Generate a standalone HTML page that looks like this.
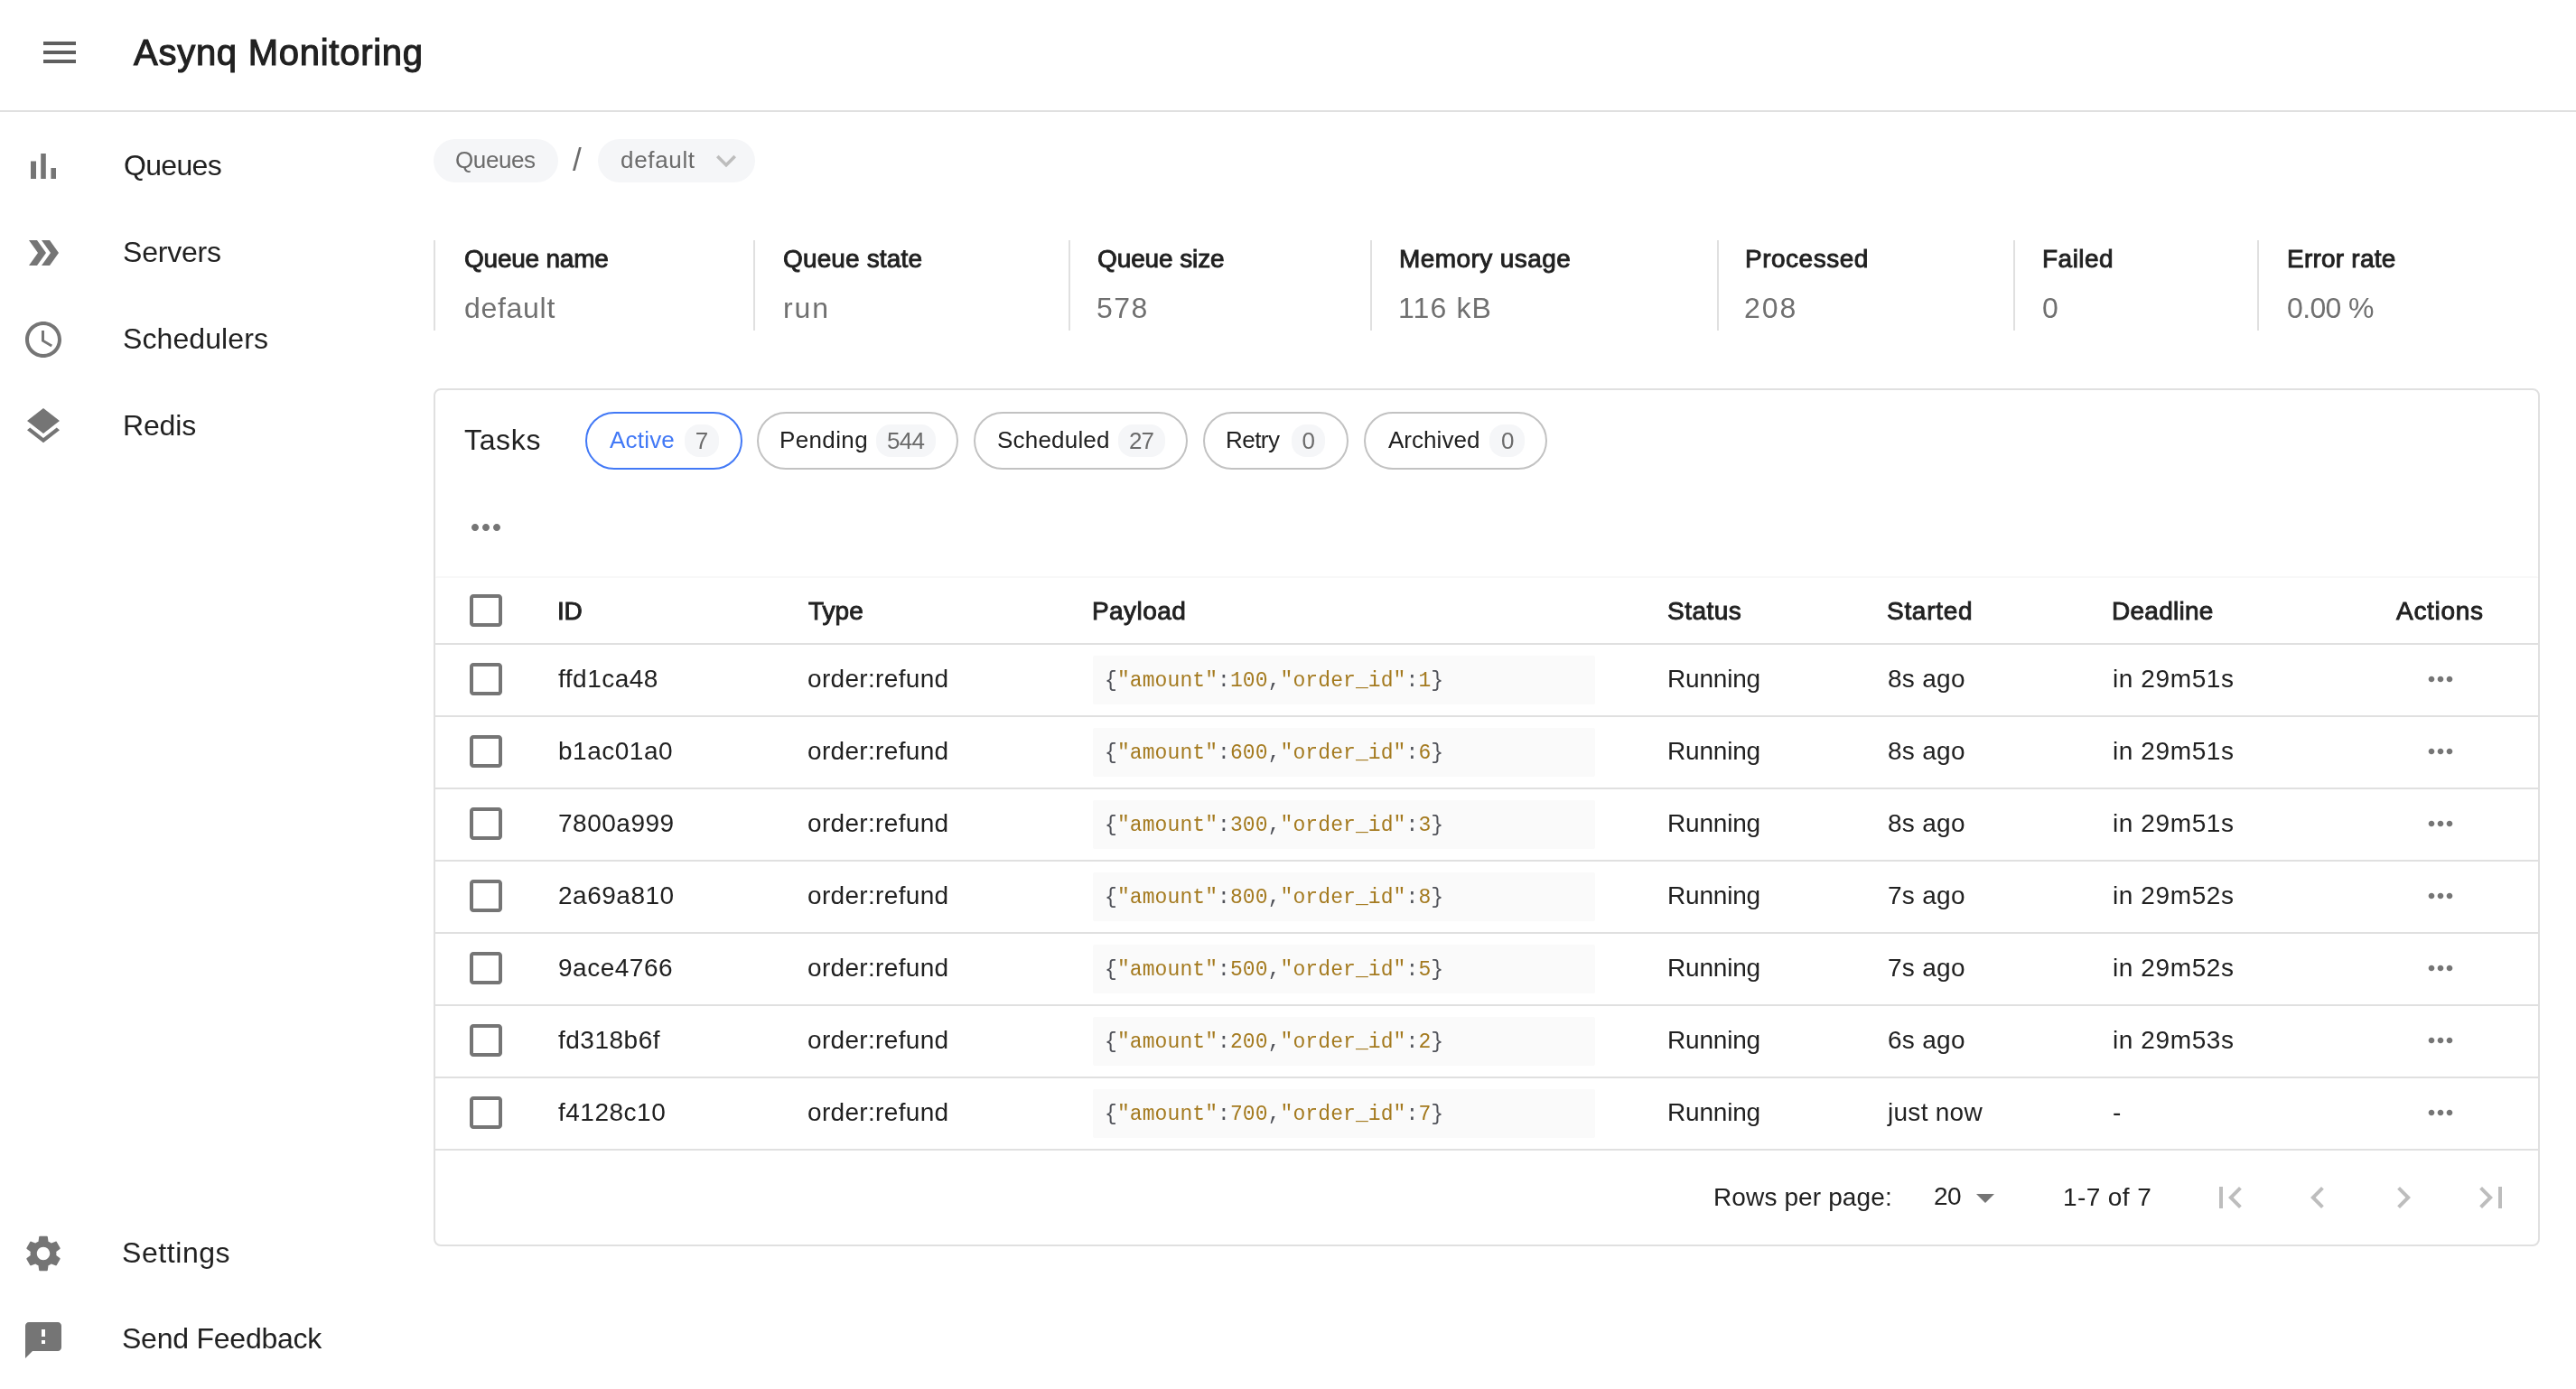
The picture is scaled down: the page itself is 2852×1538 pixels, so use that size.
<!DOCTYPE html>
<html><head><meta charset="utf-8"><title>Asynq Monitoring</title>
<style>
html,body{margin:0;padding:0;background:#ffffff;}
body{width:2852px;height:1538px;position:relative;overflow:hidden;font-family:'Liberation Sans', sans-serif;color:#212121;}
.t{position:absolute;white-space:nowrap;will-change:transform;}
.b{position:absolute;}
.i{position:absolute;display:block;}
</style></head><body>
<div class="b" style="left:0px;top:122px;width:2852px;height:2px;background:#e0e0e0"></div>
<svg class="i" style="left:42px;top:34px;width:48px;height:48px" viewBox="0 0 24 24"><path fill="#5f5f5f" d="M3 18h18v-2H3v2zm0-5h18v-2H3v2zm0-7v2h18V6H3z"/></svg>
<div class="t" style="left:147.50px;top:38.14px;font-size:40px;line-height:40px;letter-spacing:0.733px;-webkit-text-stroke:1.1px #212121;">Asynq Monitoring</div>
<svg class="i" style="left:24px;top:160px;width:48px;height:48px" viewBox="0 0 24 24"><path fill="#757575" d="M5 9.2h3V19H5zM10.6 5h2.8v14h-2.8zm5.6 8H19v6h-2.8z"/></svg>
<div class="t" style="left:136.78px;top:166.91px;font-size:32px;line-height:32px;letter-spacing:-0.680px;">Queues</div>
<svg class="i" style="left:24px;top:256px;width:48px;height:48px" viewBox="0 0 24 24"><path fill="#757575" d="M15.5 5H11l5 7-5 7h4.5l5-7zM8.5 5H4l5 7-5 7h4.5l5-7z"/></svg>
<div class="t" style="left:135.78px;top:262.91px;font-size:32px;line-height:32px;letter-spacing:-0.200px;">Servers</div>
<svg class="i" style="left:24px;top:352px;width:48px;height:48px" viewBox="0 0 24 24"><path fill="#757575" d="M11.99 2C6.47 2 2 6.48 2 12s4.47 10 9.99 10C17.52 22 22 17.52 22 12S17.52 2 11.99 2zM12 20c-4.42 0-8-3.58-8-8s3.58-8 8-8 8 3.58 8 8-3.58 8-8 8zm.5-13H11v6l5.25 3.15.75-1.230-4.5-2.67z"/></svg>
<div class="t" style="left:135.78px;top:358.91px;font-size:32px;line-height:32px;letter-spacing:0.089px;">Schedulers</div>
<svg class="i" style="left:24px;top:448px;width:48px;height:48px" viewBox="0 0 24 24"><path fill="#757575" d="M11.99 18.54l-7.37-5.73L3 14.07l9 7 9-7-1.63-1.27-7.38 5.74zM12 16l7.36-5.73L21 9l-9-7-9 7 1.63 1.27L12 16z"/></svg>
<div class="t" style="left:135.78px;top:454.91px;font-size:32px;line-height:32px;letter-spacing:-0.150px;">Redis</div>
<svg class="i" style="left:24px;top:1364px;width:48px;height:48px" viewBox="0 0 24 24"><path fill="#757575" d="M19.14 12.94c.04-.3.06-.61.06-.94 0-.32-.02-.64-.07-.94l2.03-1.58c.18-.14.23-.41.12-.61l-1.92-3.32c-.12-.22-.37-.29-.59-.22l-2.39.96c-.5-.38-1.03-.7-1.62-.94l-.36-2.54c-.04-.24-.24-.41-.48-.41h-3.84c-.24 0-.43.17-.47.41l-.36 2.54c-.59.24-1.13.57-1.62.94l-2.39-.96c-.22-.08-.47 0-.59.22L2.74 8.87c-.12.21-.08.47.12.61l2.03 1.58c-.05.3-.09.63-.09.94s.02.64.07.94l-2.03 1.58c-.18.14-.23.41-.12.61l1.92 3.32c.12.22.37.29.59.22l2.39-.96c.5.38 1.03.7 1.62.94l.36 2.54c.05.24.24.41.48.41h3.84c.24 0 .44-.17.47-.41l.36-2.54c.59-.24 1.13-.56 1.62-.94l2.39.96c.22.08.47 0 .59-.22l1.92-3.32c.12-.22.07-.47-.12-.61l-2.01-1.58zM12 15.6c-1.98 0-3.6-1.62-3.6-3.6s1.62-3.6 3.6-3.6 3.6 1.62 3.6 3.6-1.62 3.6-3.6 3.6z"/></svg>
<div class="t" style="left:135.28px;top:1370.91px;font-size:32px;line-height:32px;letter-spacing:0.571px;">Settings</div>
<svg class="i" style="left:24px;top:1460px;width:48px;height:48px" viewBox="0 0 24 24"><path fill="#757575" d="M20 2H4c-1.1 0-1.99.9-1.99 2L2 22l4-4h14c1.1 0 2-.9 2-2V4c0-1.1-.9-2-2-2zm-7 12h-2v-2h2v2zm0-4h-2V6h2v4z"/></svg>
<div class="t" style="left:135.28px;top:1465.91px;font-size:32px;line-height:32px;letter-spacing:-0.233px;">Send Feedback</div>
<div class="b" style="left:480px;top:154px;width:138px;height:48px;background:#f5f6f8;border-radius:24px"></div>
<div class="t" style="left:504.44px;top:163.99px;font-size:26px;line-height:26px;color:#6b6b6b;letter-spacing:-0.400px;">Queues</div>
<div class="t" style="left:633.60px;top:158.87px;font-size:35px;line-height:35px;color:#6b6b6b;">/</div>
<div class="b" style="left:662px;top:154px;width:174px;height:48px;background:#f5f6f8;border-radius:24px"></div>
<div class="t" style="left:686.94px;top:163.99px;font-size:26px;line-height:26px;color:#6b6b6b;letter-spacing:0.667px;">default</div>
<svg class="i" style="left:782px;top:156px;width:44px;height:44px" viewBox="0 0 24 24"><path fill="#bdbdbd" d="M16.59 8.59L12 13.17 7.41 8.59 6 10l6 6 6-6z"/></svg>
<div class="b" style="left:480px;top:266px;width:2px;height:100px;background:#e0e0e0"></div>
<div class="t" style="left:513.62px;top:273.30px;font-size:28px;line-height:28px;letter-spacing:-0.222px;-webkit-text-stroke:0.9px #212121;">Queue name</div>
<div class="t" style="left:514.08px;top:324.91px;font-size:32px;line-height:32px;color:#707070;letter-spacing:0.700px;">default</div>
<div class="b" style="left:834px;top:266px;width:2px;height:100px;background:#e0e0e0"></div>
<div class="t" style="left:867.02px;top:273.30px;font-size:28px;line-height:28px;letter-spacing:0.140px;-webkit-text-stroke:0.9px #212121;">Queue state</div>
<div class="t" style="left:866.78px;top:324.91px;font-size:32px;line-height:32px;color:#707070;letter-spacing:1.900px;">run</div>
<div class="b" style="left:1183px;top:266px;width:2px;height:100px;background:#e0e0e0"></div>
<div class="t" style="left:1215.32px;top:273.30px;font-size:28px;line-height:28px;letter-spacing:-0.111px;-webkit-text-stroke:0.9px #212121;">Queue size</div>
<div class="t" style="left:1213.88px;top:324.91px;font-size:32px;line-height:32px;color:#707070;letter-spacing:1.400px;">578</div>
<div class="b" style="left:1517px;top:266px;width:2px;height:100px;background:#e0e0e0"></div>
<div class="t" style="left:1548.72px;top:273.30px;font-size:28px;line-height:28px;letter-spacing:0.418px;-webkit-text-stroke:0.9px #212121;">Memory usage</div>
<div class="t" style="left:1548.18px;top:324.91px;font-size:32px;line-height:32px;color:#707070;letter-spacing:1.120px;">116 kB</div>
<div class="b" style="left:1901px;top:266px;width:2px;height:100px;background:#e0e0e0"></div>
<div class="t" style="left:1932.32px;top:273.30px;font-size:28px;line-height:28px;letter-spacing:0.500px;-webkit-text-stroke:0.9px #212121;">Processed</div>
<div class="t" style="left:1931.48px;top:324.91px;font-size:32px;line-height:32px;color:#707070;letter-spacing:2.000px;">208</div>
<div class="b" style="left:2229px;top:266px;width:2px;height:100px;background:#e0e0e0"></div>
<div class="t" style="left:2261.32px;top:273.30px;font-size:28px;line-height:28px;letter-spacing:0.480px;-webkit-text-stroke:0.9px #212121;">Failed</div>
<div class="t" style="left:2261.38px;top:324.91px;font-size:32px;line-height:32px;color:#707070;">0</div>
<div class="b" style="left:2499px;top:266px;width:2px;height:100px;background:#e0e0e0"></div>
<div class="t" style="left:2531.62px;top:273.30px;font-size:28px;line-height:28px;letter-spacing:0.222px;-webkit-text-stroke:0.9px #212121;">Error rate</div>
<div class="t" style="left:2532.08px;top:324.91px;font-size:32px;line-height:32px;color:#707070;letter-spacing:-0.640px;">0.00 %</div>
<div class="b" style="left:480px;top:430px;width:2332px;height:950px;border:2px solid #e0e0e0;border-radius:8px;box-sizing:border-box"></div>
<div class="t" style="left:514.08px;top:470.91px;font-size:32px;line-height:32px;letter-spacing:0.650px;">Tasks</div>
<div class="b" style="left:648px;top:456px;width:174px;height:64px;border:2px solid #4279f6;border-radius:32px;box-sizing:border-box"></div>
<div class="t" style="left:674.74px;top:474.09px;font-size:26px;line-height:26px;color:#4279f6;letter-spacing:0.200px;">Active</div>
<div class="b" style="left:758px;top:470px;width:38px;height:36px;background:#f5f6f8;border-radius:16px"></div>
<div class="t" style="left:758.4px;width:38px;top:475.0px;font-size:26px;line-height:26px;color:#6b6b6b;text-align:center;letter-spacing:-0.8px;text-indent:-0.8px">7</div>
<div class="b" style="left:838px;top:456px;width:223.4px;height:64px;border:2px solid #c2c2c2;border-radius:32px;box-sizing:border-box"></div>
<div class="t" style="left:862.94px;top:474.09px;font-size:26px;line-height:26px;letter-spacing:0.367px;">Pending</div>
<div class="b" style="left:970px;top:470px;width:66px;height:36px;background:#f5f6f8;border-radius:16px"></div>
<div class="t" style="left:970.4px;width:66px;top:475.0px;font-size:26px;line-height:26px;color:#6b6b6b;text-align:center;letter-spacing:-0.8px;text-indent:-0.8px">544</div>
<div class="b" style="left:1078px;top:456px;width:237.4px;height:64px;border:2px solid #c2c2c2;border-radius:32px;box-sizing:border-box"></div>
<div class="t" style="left:1103.64px;top:474.09px;font-size:26px;line-height:26px;letter-spacing:0.200px;">Scheduled</div>
<div class="b" style="left:1238px;top:470px;width:52px;height:36px;background:#f5f6f8;border-radius:16px"></div>
<div class="t" style="left:1238.4px;width:52px;top:475.0px;font-size:26px;line-height:26px;color:#6b6b6b;text-align:center;letter-spacing:-0.8px;text-indent:-0.8px">27</div>
<div class="b" style="left:1332.4px;top:456px;width:160.6px;height:64px;border:2px solid #c2c2c2;border-radius:32px;box-sizing:border-box"></div>
<div class="t" style="left:1357.14px;top:474.09px;font-size:26px;line-height:26px;letter-spacing:-0.550px;">Retry</div>
<div class="b" style="left:1430px;top:470px;width:37.4px;height:36px;background:#f5f6f8;border-radius:16px"></div>
<div class="t" style="left:1430.4px;width:37.4px;top:475.0px;font-size:26px;line-height:26px;color:#6b6b6b;text-align:center;letter-spacing:-0.8px;text-indent:-0.8px">0</div>
<div class="b" style="left:1510.2px;top:456px;width:203.1px;height:64px;border:2px solid #c2c2c2;border-radius:32px;box-sizing:border-box"></div>
<div class="t" style="left:1536.84px;top:474.09px;font-size:26px;line-height:26px;letter-spacing:0.029px;">Archived</div>
<div class="b" style="left:1649.3px;top:470px;width:38.4px;height:36px;background:#f5f6f8;border-radius:16px"></div>
<div class="t" style="left:1649.7px;width:38.4px;top:475.0px;font-size:26px;line-height:26px;color:#6b6b6b;text-align:center;letter-spacing:-0.8px;text-indent:-0.8px">0</div>
<svg class="i" style="left:514px;top:560px;width:48px;height:48px" viewBox="0 0 24 24"><path fill="#757575" d="M6 10c-1.1 0-2 .9-2 2s.9 2 2 2 2-.9 2-2-.9-2-2-2zm12 0c-1.1 0-2 .9-2 2s.9 2 2 2 2-.9 2-2-.9-2-2-2zm-6 0c-1.1 0-2 .9-2 2s.9 2 2 2 2-.9 2-2-.9-2-2-2z"/></svg>
<div class="b" style="left:482px;top:638px;width:2328px;height:2px;background:#f8f8f8;border-radius:8px 8px 0 0"></div>
<svg class="i" style="left:514px;top:652px;width:48px;height:48px" viewBox="0 0 24 24"><path fill="#757575" d="M19 5v14H5V5h14m0-2H5c-1.11 0-2 .9-2 2v14c0 1.1.89 2 2 2h14c1.1 0 2-.9 2-2V5c0-1.1-.9-2-2-2z"/></svg>
<div class="t" style="left:616.62px;top:663.30px;font-size:28px;line-height:28px;letter-spacing:-0.200px;-webkit-text-stroke:0.9px #212121;">ID</div>
<div class="t" style="left:894.72px;top:663.30px;font-size:28px;line-height:28px;-webkit-text-stroke:0.9px #212121;">Type</div>
<div class="t" style="left:1208.82px;top:663.30px;font-size:28px;line-height:28px;letter-spacing:0.433px;-webkit-text-stroke:0.9px #212121;">Payload</div>
<div class="t" style="left:1845.62px;top:663.30px;font-size:28px;line-height:28px;letter-spacing:0.480px;-webkit-text-stroke:0.9px #212121;">Status</div>
<div class="t" style="left:2089.42px;top:663.30px;font-size:28px;line-height:28px;letter-spacing:0.700px;-webkit-text-stroke:0.9px #212121;">Started</div>
<div class="t" style="left:2338.42px;top:663.30px;font-size:28px;line-height:28px;letter-spacing:0.257px;-webkit-text-stroke:0.9px #212121;">Deadline</div>
<div class="t" style="left:2653.32px;top:663.30px;font-size:28px;line-height:28px;letter-spacing:0.700px;-webkit-text-stroke:0.9px #212121;">Actions</div>
<div class="b" style="left:482px;top:712px;width:2328px;height:2px;background:#e0e0e0"></div>
<svg class="i" style="left:514px;top:728px;width:48px;height:48px" viewBox="0 0 24 24"><path fill="#757575" d="M19 5v14H5V5h14m0-2H5c-1.11 0-2 .9-2 2v14c0 1.1.89 2 2 2h14c1.1 0 2-.9 2-2V5c0-1.1-.9-2-2-2z"/></svg>
<div class="t" style="left:617.71px;top:738.30px;font-size:28px;line-height:28px;letter-spacing:0.503px;">ffd1ca48</div>
<div class="t" style="left:893.72px;top:738.30px;font-size:28px;line-height:28px;letter-spacing:0.327px;">order:refund</div>
<div class="b" style="left:1210px;top:726px;width:556px;height:54px;background:#fafafa;border-radius:2px"></div>
<div class="t" style="left:1222.50px;top:742.88px;font-size:23px;line-height:23px;color:#a47a1f;letter-spacing:0.092px;font-family:'Liberation Mono', monospace;"><span style="color:#505259">{</span>&quot;amount&quot;<span style="color:#505259">:</span>100<span style="color:#505259">,</span>&quot;order_id&quot;<span style="color:#505259">:</span>1<span style="color:#505259">}</span></div>
<div class="t" style="left:1846.32px;top:738.30px;font-size:28px;line-height:28px;letter-spacing:-0.200px;">Running</div>
<div class="t" style="left:2089.71px;top:738.30px;font-size:28px;line-height:28px;letter-spacing:0.280px;">8s ago</div>
<div class="t" style="left:2338.56px;top:738.30px;font-size:28px;line-height:28px;letter-spacing:0.600px;">in 29m51s</div>
<svg class="i" style="left:2682px;top:732px;width:40px;height:40px" viewBox="0 0 24 24"><path fill="#757575" d="M6 10c-1.1 0-2 .9-2 2s.9 2 2 2 2-.9 2-2-.9-2-2-2zm12 0c-1.1 0-2 .9-2 2s.9 2 2 2 2-.9 2-2-.9-2-2-2zm-6 0c-1.1 0-2 .9-2 2s.9 2 2 2 2-.9 2-2-.9-2-2-2z"/></svg>
<div class="b" style="left:482px;top:792px;width:2328px;height:2px;background:#e0e0e0"></div>
<svg class="i" style="left:514px;top:808px;width:48px;height:48px" viewBox="0 0 24 24"><path fill="#757575" d="M19 5v14H5V5h14m0-2H5c-1.11 0-2 .9-2 2v14c0 1.1.89 2 2 2h14c1.1 0 2-.9 2-2V5c0-1.1-.9-2-2-2z"/></svg>
<div class="t" style="left:617.71px;top:818.30px;font-size:28px;line-height:28px;letter-spacing:0.503px;">b1ac01a0</div>
<div class="t" style="left:893.72px;top:818.30px;font-size:28px;line-height:28px;letter-spacing:0.327px;">order:refund</div>
<div class="b" style="left:1210px;top:806px;width:556px;height:54px;background:#fafafa;border-radius:2px"></div>
<div class="t" style="left:1222.50px;top:822.88px;font-size:23px;line-height:23px;color:#a47a1f;letter-spacing:0.092px;font-family:'Liberation Mono', monospace;"><span style="color:#505259">{</span>&quot;amount&quot;<span style="color:#505259">:</span>600<span style="color:#505259">,</span>&quot;order_id&quot;<span style="color:#505259">:</span>6<span style="color:#505259">}</span></div>
<div class="t" style="left:1846.32px;top:818.30px;font-size:28px;line-height:28px;letter-spacing:-0.200px;">Running</div>
<div class="t" style="left:2089.71px;top:818.30px;font-size:28px;line-height:28px;letter-spacing:0.280px;">8s ago</div>
<div class="t" style="left:2338.56px;top:818.30px;font-size:28px;line-height:28px;letter-spacing:0.600px;">in 29m51s</div>
<svg class="i" style="left:2682px;top:812px;width:40px;height:40px" viewBox="0 0 24 24"><path fill="#757575" d="M6 10c-1.1 0-2 .9-2 2s.9 2 2 2 2-.9 2-2-.9-2-2-2zm12 0c-1.1 0-2 .9-2 2s.9 2 2 2 2-.9 2-2-.9-2-2-2zm-6 0c-1.1 0-2 .9-2 2s.9 2 2 2 2-.9 2-2-.9-2-2-2z"/></svg>
<div class="b" style="left:482px;top:872px;width:2328px;height:2px;background:#e0e0e0"></div>
<svg class="i" style="left:514px;top:888px;width:48px;height:48px" viewBox="0 0 24 24"><path fill="#757575" d="M19 5v14H5V5h14m0-2H5c-1.11 0-2 .9-2 2v14c0 1.1.89 2 2 2h14c1.1 0 2-.9 2-2V5c0-1.1-.9-2-2-2z"/></svg>
<div class="t" style="left:617.71px;top:898.30px;font-size:28px;line-height:28px;letter-spacing:0.503px;">7800a999</div>
<div class="t" style="left:893.72px;top:898.30px;font-size:28px;line-height:28px;letter-spacing:0.327px;">order:refund</div>
<div class="b" style="left:1210px;top:886px;width:556px;height:54px;background:#fafafa;border-radius:2px"></div>
<div class="t" style="left:1222.50px;top:902.88px;font-size:23px;line-height:23px;color:#a47a1f;letter-spacing:0.092px;font-family:'Liberation Mono', monospace;"><span style="color:#505259">{</span>&quot;amount&quot;<span style="color:#505259">:</span>300<span style="color:#505259">,</span>&quot;order_id&quot;<span style="color:#505259">:</span>3<span style="color:#505259">}</span></div>
<div class="t" style="left:1846.32px;top:898.30px;font-size:28px;line-height:28px;letter-spacing:-0.200px;">Running</div>
<div class="t" style="left:2089.71px;top:898.30px;font-size:28px;line-height:28px;letter-spacing:0.280px;">8s ago</div>
<div class="t" style="left:2338.56px;top:898.30px;font-size:28px;line-height:28px;letter-spacing:0.600px;">in 29m51s</div>
<svg class="i" style="left:2682px;top:892px;width:40px;height:40px" viewBox="0 0 24 24"><path fill="#757575" d="M6 10c-1.1 0-2 .9-2 2s.9 2 2 2 2-.9 2-2-.9-2-2-2zm12 0c-1.1 0-2 .9-2 2s.9 2 2 2 2-.9 2-2-.9-2-2-2zm-6 0c-1.1 0-2 .9-2 2s.9 2 2 2 2-.9 2-2-.9-2-2-2z"/></svg>
<div class="b" style="left:482px;top:952px;width:2328px;height:2px;background:#e0e0e0"></div>
<svg class="i" style="left:514px;top:968px;width:48px;height:48px" viewBox="0 0 24 24"><path fill="#757575" d="M19 5v14H5V5h14m0-2H5c-1.11 0-2 .9-2 2v14c0 1.1.89 2 2 2h14c1.1 0 2-.9 2-2V5c0-1.1-.9-2-2-2z"/></svg>
<div class="t" style="left:617.71px;top:978.30px;font-size:28px;line-height:28px;letter-spacing:0.503px;">2a69a810</div>
<div class="t" style="left:893.72px;top:978.30px;font-size:28px;line-height:28px;letter-spacing:0.327px;">order:refund</div>
<div class="b" style="left:1210px;top:966px;width:556px;height:54px;background:#fafafa;border-radius:2px"></div>
<div class="t" style="left:1222.50px;top:982.88px;font-size:23px;line-height:23px;color:#a47a1f;letter-spacing:0.092px;font-family:'Liberation Mono', monospace;"><span style="color:#505259">{</span>&quot;amount&quot;<span style="color:#505259">:</span>800<span style="color:#505259">,</span>&quot;order_id&quot;<span style="color:#505259">:</span>8<span style="color:#505259">}</span></div>
<div class="t" style="left:1846.32px;top:978.30px;font-size:28px;line-height:28px;letter-spacing:-0.200px;">Running</div>
<div class="t" style="left:2089.71px;top:978.30px;font-size:28px;line-height:28px;letter-spacing:0.280px;">7s ago</div>
<div class="t" style="left:2338.56px;top:978.30px;font-size:28px;line-height:28px;letter-spacing:0.600px;">in 29m52s</div>
<svg class="i" style="left:2682px;top:972px;width:40px;height:40px" viewBox="0 0 24 24"><path fill="#757575" d="M6 10c-1.1 0-2 .9-2 2s.9 2 2 2 2-.9 2-2-.9-2-2-2zm12 0c-1.1 0-2 .9-2 2s.9 2 2 2 2-.9 2-2-.9-2-2-2zm-6 0c-1.1 0-2 .9-2 2s.9 2 2 2 2-.9 2-2-.9-2-2-2z"/></svg>
<div class="b" style="left:482px;top:1032px;width:2328px;height:2px;background:#e0e0e0"></div>
<svg class="i" style="left:514px;top:1048px;width:48px;height:48px" viewBox="0 0 24 24"><path fill="#757575" d="M19 5v14H5V5h14m0-2H5c-1.11 0-2 .9-2 2v14c0 1.1.89 2 2 2h14c1.1 0 2-.9 2-2V5c0-1.1-.9-2-2-2z"/></svg>
<div class="t" style="left:617.71px;top:1058.30px;font-size:28px;line-height:28px;letter-spacing:0.503px;">9ace4766</div>
<div class="t" style="left:893.72px;top:1058.30px;font-size:28px;line-height:28px;letter-spacing:0.327px;">order:refund</div>
<div class="b" style="left:1210px;top:1046px;width:556px;height:54px;background:#fafafa;border-radius:2px"></div>
<div class="t" style="left:1222.50px;top:1062.88px;font-size:23px;line-height:23px;color:#a47a1f;letter-spacing:0.092px;font-family:'Liberation Mono', monospace;"><span style="color:#505259">{</span>&quot;amount&quot;<span style="color:#505259">:</span>500<span style="color:#505259">,</span>&quot;order_id&quot;<span style="color:#505259">:</span>5<span style="color:#505259">}</span></div>
<div class="t" style="left:1846.32px;top:1058.30px;font-size:28px;line-height:28px;letter-spacing:-0.200px;">Running</div>
<div class="t" style="left:2089.71px;top:1058.30px;font-size:28px;line-height:28px;letter-spacing:0.280px;">7s ago</div>
<div class="t" style="left:2338.56px;top:1058.30px;font-size:28px;line-height:28px;letter-spacing:0.600px;">in 29m52s</div>
<svg class="i" style="left:2682px;top:1052px;width:40px;height:40px" viewBox="0 0 24 24"><path fill="#757575" d="M6 10c-1.1 0-2 .9-2 2s.9 2 2 2 2-.9 2-2-.9-2-2-2zm12 0c-1.1 0-2 .9-2 2s.9 2 2 2 2-.9 2-2-.9-2-2-2zm-6 0c-1.1 0-2 .9-2 2s.9 2 2 2 2-.9 2-2-.9-2-2-2z"/></svg>
<div class="b" style="left:482px;top:1112px;width:2328px;height:2px;background:#e0e0e0"></div>
<svg class="i" style="left:514px;top:1128px;width:48px;height:48px" viewBox="0 0 24 24"><path fill="#757575" d="M19 5v14H5V5h14m0-2H5c-1.11 0-2 .9-2 2v14c0 1.1.89 2 2 2h14c1.1 0 2-.9 2-2V5c0-1.1-.9-2-2-2z"/></svg>
<div class="t" style="left:617.71px;top:1138.30px;font-size:28px;line-height:28px;letter-spacing:0.503px;">fd318b6f</div>
<div class="t" style="left:893.72px;top:1138.30px;font-size:28px;line-height:28px;letter-spacing:0.327px;">order:refund</div>
<div class="b" style="left:1210px;top:1126px;width:556px;height:54px;background:#fafafa;border-radius:2px"></div>
<div class="t" style="left:1222.50px;top:1142.88px;font-size:23px;line-height:23px;color:#a47a1f;letter-spacing:0.092px;font-family:'Liberation Mono', monospace;"><span style="color:#505259">{</span>&quot;amount&quot;<span style="color:#505259">:</span>200<span style="color:#505259">,</span>&quot;order_id&quot;<span style="color:#505259">:</span>2<span style="color:#505259">}</span></div>
<div class="t" style="left:1846.32px;top:1138.30px;font-size:28px;line-height:28px;letter-spacing:-0.200px;">Running</div>
<div class="t" style="left:2089.71px;top:1138.30px;font-size:28px;line-height:28px;letter-spacing:0.280px;">6s ago</div>
<div class="t" style="left:2338.56px;top:1138.30px;font-size:28px;line-height:28px;letter-spacing:0.600px;">in 29m53s</div>
<svg class="i" style="left:2682px;top:1132px;width:40px;height:40px" viewBox="0 0 24 24"><path fill="#757575" d="M6 10c-1.1 0-2 .9-2 2s.9 2 2 2 2-.9 2-2-.9-2-2-2zm12 0c-1.1 0-2 .9-2 2s.9 2 2 2 2-.9 2-2-.9-2-2-2zm-6 0c-1.1 0-2 .9-2 2s.9 2 2 2 2-.9 2-2-.9-2-2-2z"/></svg>
<div class="b" style="left:482px;top:1192px;width:2328px;height:2px;background:#e0e0e0"></div>
<svg class="i" style="left:514px;top:1208px;width:48px;height:48px" viewBox="0 0 24 24"><path fill="#757575" d="M19 5v14H5V5h14m0-2H5c-1.11 0-2 .9-2 2v14c0 1.1.89 2 2 2h14c1.1 0 2-.9 2-2V5c0-1.1-.9-2-2-2z"/></svg>
<div class="t" style="left:617.71px;top:1218.30px;font-size:28px;line-height:28px;letter-spacing:0.503px;">f4128c10</div>
<div class="t" style="left:893.72px;top:1218.30px;font-size:28px;line-height:28px;letter-spacing:0.327px;">order:refund</div>
<div class="b" style="left:1210px;top:1206px;width:556px;height:54px;background:#fafafa;border-radius:2px"></div>
<div class="t" style="left:1222.50px;top:1222.88px;font-size:23px;line-height:23px;color:#a47a1f;letter-spacing:0.092px;font-family:'Liberation Mono', monospace;"><span style="color:#505259">{</span>&quot;amount&quot;<span style="color:#505259">:</span>700<span style="color:#505259">,</span>&quot;order_id&quot;<span style="color:#505259">:</span>7<span style="color:#505259">}</span></div>
<div class="t" style="left:1846.32px;top:1218.30px;font-size:28px;line-height:28px;letter-spacing:-0.200px;">Running</div>
<div class="t" style="left:2089.71px;top:1218.30px;font-size:28px;line-height:28px;letter-spacing:0.280px;">just now</div>
<div class="t" style="left:2338.56px;top:1218.30px;font-size:28px;line-height:28px;letter-spacing:0.600px;">-</div>
<svg class="i" style="left:2682px;top:1212px;width:40px;height:40px" viewBox="0 0 24 24"><path fill="#757575" d="M6 10c-1.1 0-2 .9-2 2s.9 2 2 2 2-.9 2-2-.9-2-2-2zm12 0c-1.1 0-2 .9-2 2s.9 2 2 2 2-.9 2-2-.9-2-2-2zm-6 0c-1.1 0-2 .9-2 2s.9 2 2 2 2-.9 2-2-.9-2-2-2z"/></svg>
<div class="b" style="left:482px;top:1272px;width:2328px;height:2px;background:#e0e0e0"></div>
<div class="t" style="left:1896.52px;top:1312.10px;font-size:28px;line-height:28px;letter-spacing:0.123px;">Rows per page:</div>
<div class="t" style="left:2141.32px;top:1310.90px;font-size:28px;line-height:28px;letter-spacing:-0.600px;">20</div>
<svg class="i" style="left:2174px;top:1301.5px;width:48px;height:48px" viewBox="0 0 24 24"><path fill="#757575" d="M7 10l5 5 5-5z"/></svg>
<div class="t" style="left:2284.32px;top:1312.10px;font-size:28px;line-height:28px;letter-spacing:0.400px;">1-7 of 7</div>
<svg class="i" style="left:2445.4px;top:1302px;width:48px;height:48px" viewBox="0 0 24 24"><path fill="#bdbdbd" d="M18.41 16.59L13.82 12l4.59-4.59L17 6l-6 6 6 6zM6 6h2v12H6z"/></svg>
<svg class="i" style="left:2541.5px;top:1302px;width:48px;height:48px" viewBox="0 0 24 24"><path fill="#bdbdbd" d="M15.41 16.59L10.83 12l4.58-4.59L14 6l-6 6 6 6 1.41-1.41z"/></svg>
<svg class="i" style="left:2637px;top:1302px;width:48px;height:48px" viewBox="0 0 24 24"><path fill="#bdbdbd" d="M8.59 16.59L13.17 12 8.59 7.41 10 6l6 6-6 6-1.41-1.41z"/></svg>
<svg class="i" style="left:2734px;top:1302px;width:48px;height:48px" viewBox="0 0 24 24"><path fill="#bdbdbd" d="M5.59 7.41L10.18 12l-4.59 4.59L7 18l6-6-6-6zM16 6h2v12h-2z"/></svg>
</body></html>
